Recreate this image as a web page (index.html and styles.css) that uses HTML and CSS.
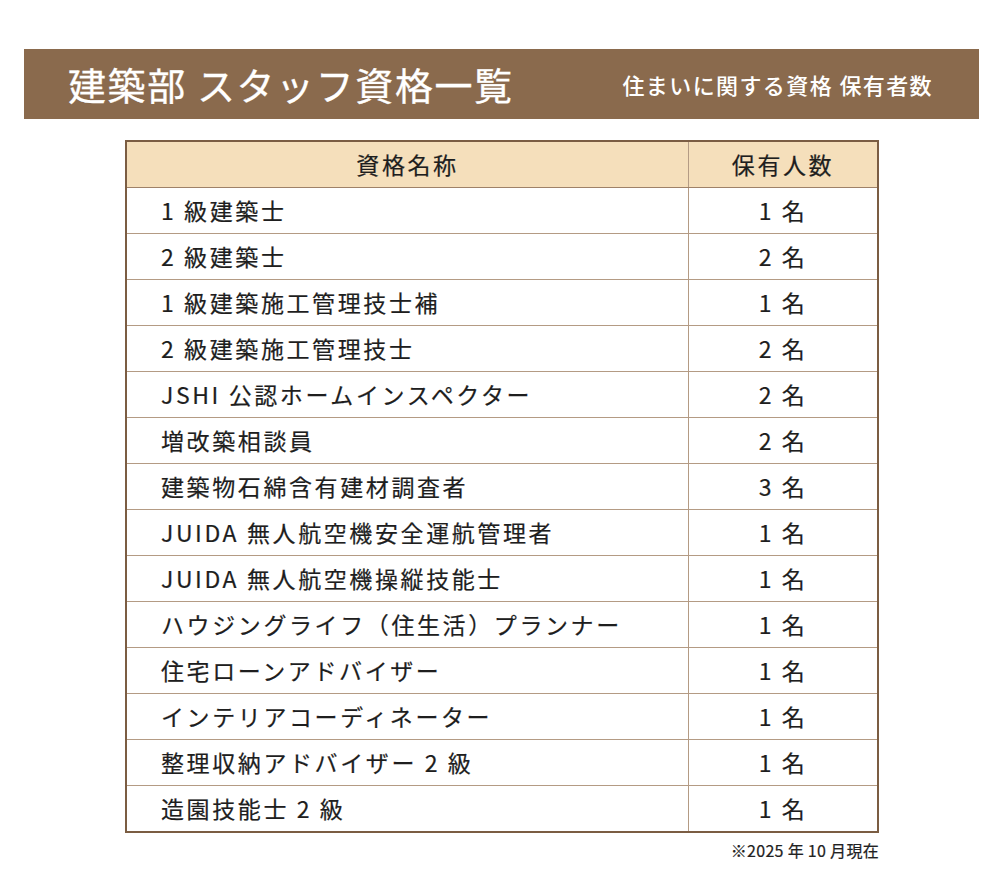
FILE: index.html
```html
<!DOCTYPE html>
<html lang="ja">
<head>
<meta charset="utf-8">
<link rel="stylesheet" href="styles.css">
</head>
<body>
<div class="page">
  <header class="banner">
    <h1 class="title">建築部 スタッフ資格一覧</h1>
    <p class="subtitle">住まいに関する資格 保有者数</p>
  </header>
  <div class="table-wrap">
    <table class="quals">
      <thead>
        <tr><th class="c-name">資格名称</th><th class="c-num">保有人数</th></tr>
      </thead>
      <tbody>
        <tr><td class="c-name">1 級建築士</td><td class="c-num">1 名</td></tr>
        <tr><td class="c-name">2 級建築士</td><td class="c-num">2 名</td></tr>
        <tr><td class="c-name">1 級建築施工管理技士補</td><td class="c-num">1 名</td></tr>
        <tr><td class="c-name">2 級建築施工管理技士</td><td class="c-num">2 名</td></tr>
        <tr><td class="c-name">JSHI 公認ホームインスペクター</td><td class="c-num">2 名</td></tr>
        <tr><td class="c-name">増改築相談員</td><td class="c-num">2 名</td></tr>
        <tr><td class="c-name">建築物石綿含有建材調査者</td><td class="c-num">3 名</td></tr>
        <tr><td class="c-name">JUIDA 無人航空機安全運航管理者</td><td class="c-num">1 名</td></tr>
        <tr><td class="c-name">JUIDA 無人航空機操縦技能士</td><td class="c-num">1 名</td></tr>
        <tr><td class="c-name">ハウジングライフ（住生活）プランナー</td><td class="c-num">1 名</td></tr>
        <tr><td class="c-name">住宅ローンアドバイザー</td><td class="c-num">1 名</td></tr>
        <tr><td class="c-name">インテリアコーディネーター</td><td class="c-num">1 名</td></tr>
        <tr><td class="c-name">整理収納アドバイザー 2 級</td><td class="c-num">1 名</td></tr>
        <tr><td class="c-name">造園技能士 2 級</td><td class="c-num">1 名</td></tr>
      </tbody>
    </table>
    <p class="note">※2025 年 10 月現在</p>
  </div>
</div>
</body>
</html>
```

FILE: styles.css
```css
html, body {
  margin: 0;
  padding: 0;
  background: #ffffff;
}
body {
  font-family: "Noto Sans CJK JP", "Noto Sans", sans-serif;
  color: #1e1e1e;
}
.page {
  width: 1000px;
  height: 885px;
  padding-top: 49px;
  box-sizing: border-box;
}
.banner {
  margin: 0 21px 0 24px;
  height: 70px;
  background: #8a6a4d;
  display: flex;
  align-items: center;
  justify-content: space-between;
  padding: 0 46px 0 44px;
  box-sizing: border-box;
  color: #ffffff;
}
.title {
  margin: 0;
  font-size: 38px;
  font-weight: 400;
  letter-spacing: 1.6px;
  line-height: 1;
  -webkit-text-stroke: 0.3px #ffffff;
}
.subtitle {
  margin: 0;
  font-size: 22px;
  font-weight: 500;
  letter-spacing: 1.4px;
  line-height: 1;
}
.table-wrap {
  margin: 21px 0 0 125px;
  width: 754px;
}
.quals {
  width: 754px;
  border-collapse: collapse;
  border: 2px solid #7b5d43;
  table-layout: fixed;
}
.quals th, .quals td {
  height: 45px;
  padding: 0;
  border: 1px solid #b49b84;
  font-size: 23px;
  letter-spacing: 2.6px;
  line-height: 1;
  font-weight: 400;
  -webkit-text-stroke: 0.2px #1e1e1e;
}
.quals th {
  background: #f5dfbb;
  text-align: center;
}
.quals thead tr th {
  border-bottom: 1px solid #9f8268;
}
.quals .c-name {
  width: 561px;
  text-align: left;
  padding-left: 34px;
}
.quals th.c-name {
  text-align: center;
  padding-left: 0;
}
.quals .c-num {
  text-align: center;
}
.quals td {
  background: #ffffff;
}
.note {
  margin: 9px 0 0 0;
  text-align: right;
  font-size: 16px;
  font-weight: 400;
  letter-spacing: 0.3px;
  line-height: 1;
  color: #222;
  -webkit-text-stroke: 0.2px #222;
}
```
